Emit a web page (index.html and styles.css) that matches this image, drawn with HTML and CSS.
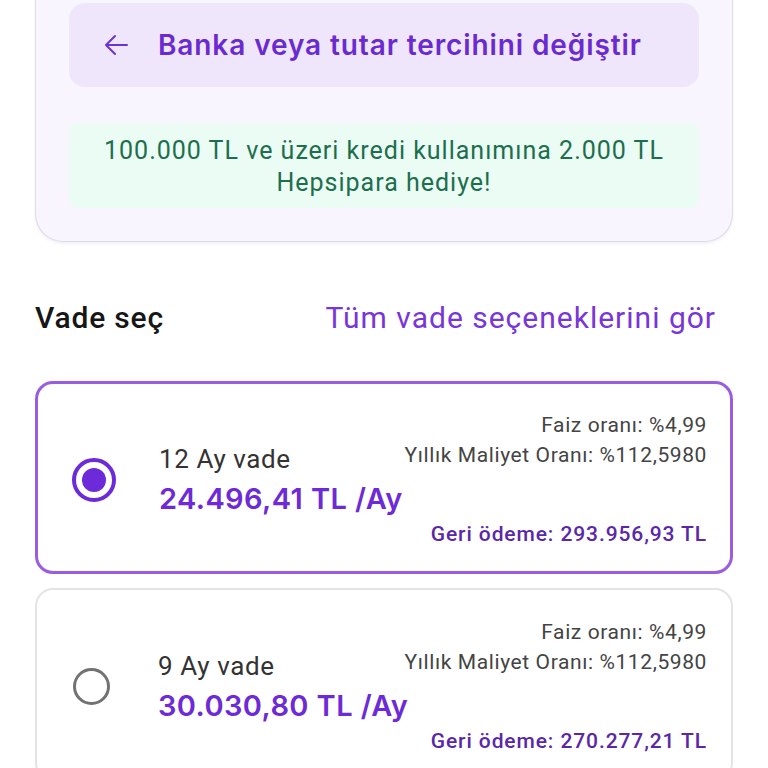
FILE: index.html
```html
<!DOCTYPE html>
<html lang="tr">
<head>
    <meta charset="UTF-8">
    <meta name="viewport" content="width=device-width, initial-scale=1.0">
    <title>Vade Seçimi</title>
    <link rel="stylesheet" href="styles.css">
</head>
<body>

<div class="page">

    <!-- Bank summary card (top part scrolled out of view) -->
    <div class="summary-card">
        <button class="change-btn" type="button">
            <svg class="arrow" width="28" height="28" viewBox="0 0 28 28" fill="none">
                <path d="M25 14H4M13 5L4 14L13 23" stroke="#6b35d1" stroke-width="2" stroke-linecap="round" stroke-linejoin="round"/>
            </svg>
            <span>Banka veya tutar tercihini değiştir</span>
        </button>

        <div class="promo">
            100.000 TL ve üzeri kredi kullanımına 2.000 TL<br>Hepsipara hediye!
        </div>
    </div>

    <div class="section-head">
        <h2>Vade seç</h2>
        <a href="#" class="see-all">Tüm vade seçeneklerini gör</a>
    </div>

    <div class="term-card selected">
        <span class="radio"></span>
        <div class="term-main">
            <div class="term-name">12 Ay vade</div>
            <div class="term-amount">24.496,41 TL /Ay</div>
        </div>
        <div class="term-info">
            <div>Faiz oranı: %4,99</div>
            <div>Yıllık Maliyet Oranı: %112,5980</div>
            <div class="refund">Geri ödeme: 293.956,93 TL</div>
        </div>
    </div>

    <div class="term-card">
        <span class="radio"></span>
        <div class="term-main">
            <div class="term-name">9 Ay vade</div>
            <div class="term-amount">30.030,80 TL /Ay</div>
        </div>
        <div class="term-info">
            <div>Faiz oranı: %4,99</div>
            <div>Yıllık Maliyet Oranı: %112,5980</div>
            <div class="refund">Geri ödeme: 270.277,21 TL</div>
        </div>
    </div>

</div>

</body>
</html>
```

FILE: styles.css
```css
body {
    margin: 0;
    padding: 0;
    background: #ffffff;
    font-family: Roboto, "Noto Sans", Arial, sans-serif;
    color: #222;
    overflow: hidden;
}

.page {
    padding: 0 35px;
}

/* top card, its top is cut off by the viewport */
.summary-card {
    margin-top: -30px;
    padding: 33px 33px 33px;
    background: #f8f5fe;
    border: 1px solid #dedbe8;
    border-top: none;
    border-radius: 0 0 28px 28px;
    box-shadow: 0 2px 3px rgba(90, 70, 140, 0.08);
}

.change-btn {
    width: 100%;
    height: 84px;
    display: flex;
    align-items: center;
    gap: 28px;
    padding: 0 0 0 33px;
    border: none;
    border-radius: 16px;
    background: #efe6fc;
    font-family: Inter, Roboto, sans-serif;
    font-size: 28px;
    font-weight: 600;
    letter-spacing: 0.9px;
    color: #6a2ad0;
    cursor: pointer;
}

.arrow {
    flex-shrink: 0;
}

.promo {
    margin-top: 36px;
    padding: 12px 10px 9px;
    background: #eafcf3;
    border-radius: 8px;
    text-align: center;
    font-size: 25px;
    letter-spacing: 1px;
    line-height: 32px;
    color: #1d6e4d;
}

.section-head {
    display: flex;
    justify-content: space-between;
    align-items: center;
    margin: 58px 0 46px;
    padding-right: 17px;
}

.section-head h2 {
    margin: 0;
    font-size: 30px;
    font-weight: 500;
    letter-spacing: 0.8px;
    color: #161616;
}

.see-all {
    font-size: 30px;
    letter-spacing: 1px;
    color: #7836d8;
    text-decoration: none;
}

.term-card {
    display: flex;
    align-items: center;
    padding: 27px 24px 23px 36px;
    margin-bottom: 14px;
    border: 2px solid #e4e4e6;
    border-radius: 18px;
    background: #fff;
    white-space: nowrap;
}

.term-card.selected {
    border: 3px solid #9b5ce4;
    padding: 26px 23px 22px 34px;
}

.radio {
    flex-shrink: 0;
    width: 37px;
    height: 37px;
    border: 3.5px solid #727272;
    border-radius: 50%;
    box-sizing: border-box;
    margin-right: 48px;
    position: relative;
}

.selected .radio {
    width: 44px;
    height: 44px;
    margin-right: 43px;
    border: 4px solid #6d2ad8;
}

/* inner dot of the chosen radio */
.selected .radio::after {
    content: "";
    position: absolute;
    left: 6px;
    top: 6px;
    width: 24px;
    height: 24px;
    border-radius: 50%;
    background: #6d2ad8;
}

.term-main {
    flex: 1;
    min-width: 0;
}

.term-name {
    font-size: 26px;
    letter-spacing: 0.6px;
    line-height: 34px;
    color: #333;
}

.term-amount {
    margin-top: 4px;
    font-family: Inter, Roboto, sans-serif;
    font-size: 29px;
    font-weight: 600;
    letter-spacing: 0.4px;
    line-height: 38px;
    color: #6d2ad6;
}

.term-info {
    flex-shrink: 0;
    text-align: right;
    font-size: 21px;
    letter-spacing: 0.6px;
    line-height: 30px;
    color: #444;
}

.term-info .refund {
    margin-top: 49px;
    color: #5a27a8;
    font-weight: 500;
    letter-spacing: 0.9px;
}
```
